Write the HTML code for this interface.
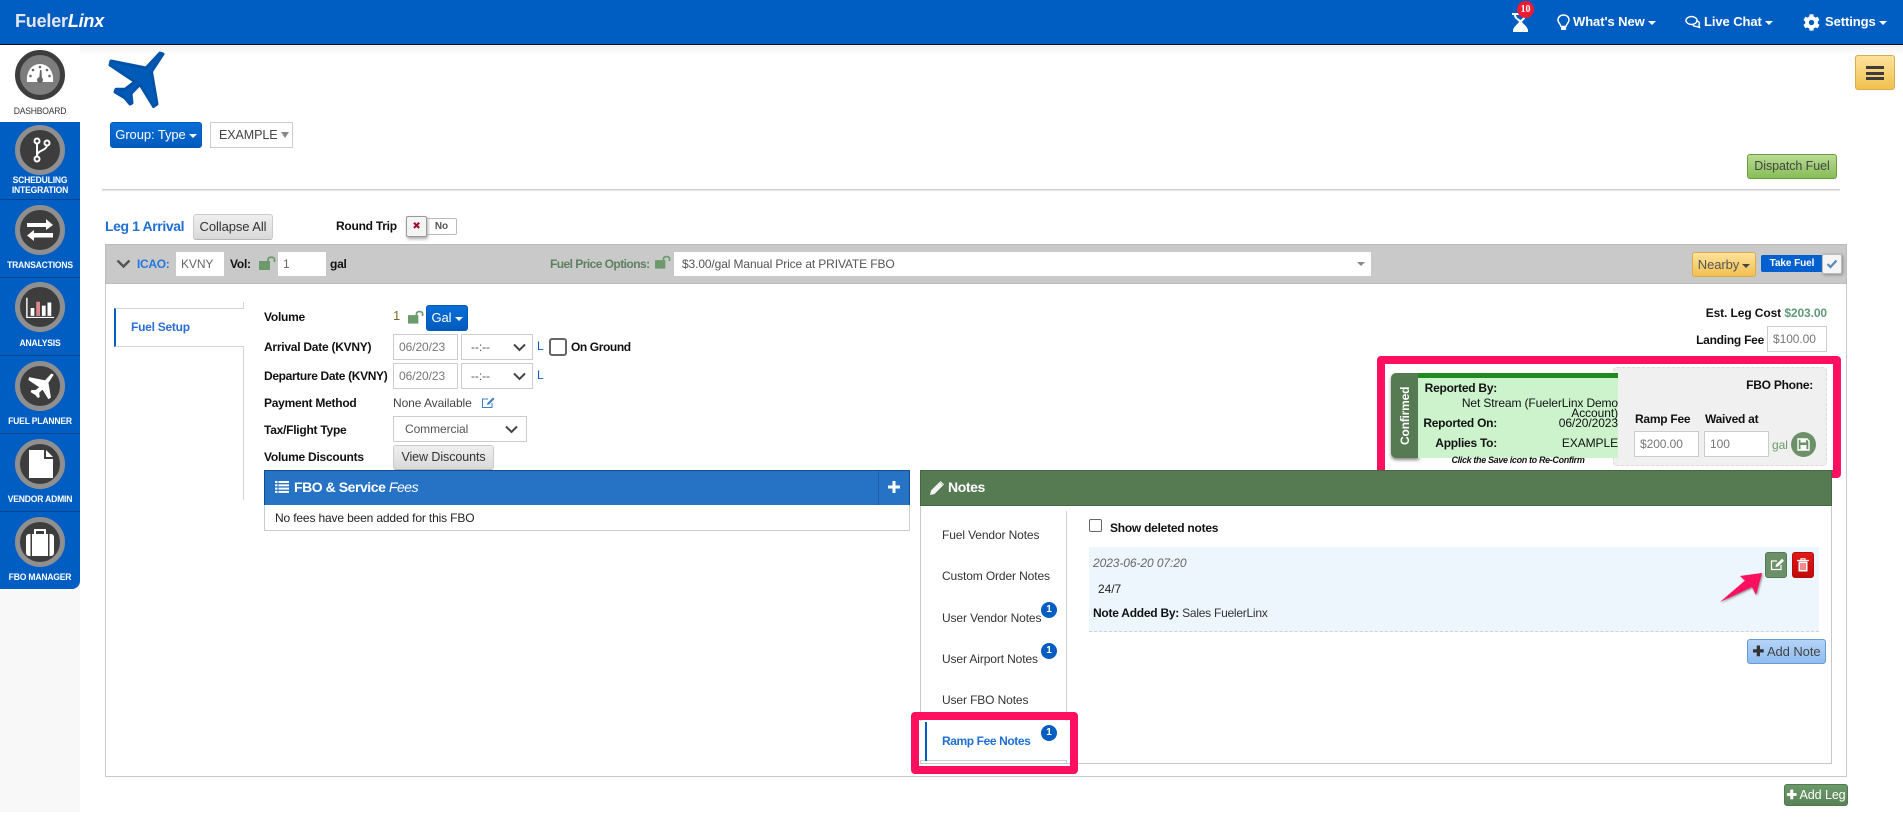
<!DOCTYPE html>
<html><head><meta charset="utf-8"><title>FuelerLinx</title>
<style>
html,body{margin:0;padding:0;background:#fff}
body{width:1903px;height:829px;overflow:hidden;position:relative;font-family:"Liberation Sans",Arial,sans-serif;font-size:12px;color:#333;letter-spacing:-.08px}
.a,.t,svg.a{position:absolute}
.t{white-space:nowrap;line-height:16px;height:16px}
.b{font-weight:bold;color:#111;letter-spacing:-.25px}
.r{text-align:right}
.inp{position:absolute;box-sizing:border-box;background:#fff;border:1px solid #ccc;color:#666;line-height:24px;padding-left:5px;white-space:nowrap}
.btn{position:absolute;box-sizing:border-box;border-radius:3px;text-align:center;white-space:nowrap}
.gray{background:linear-gradient(#efefef,#d9d9d9);border:1px solid #ccc;border-bottom:1px solid #b5b5b5;color:#333}
.blue{background:linear-gradient(#0a6fd8,#005bbd);border:1px solid #0058b8;color:#fff}
.nav{position:absolute;left:0;width:80px;background:#005ec2;border-bottom:1px solid #00458f;box-sizing:border-box}
.circ{position:absolute;left:15px;width:50px;height:50px;box-sizing:border-box;border-radius:50%;background:#3d3d3d;border:5px solid #8f8f8f}
.nl{position:absolute;left:0;width:80px;text-align:center;font-size:9.5px;line-height:10px;font-weight:bold;color:#fff;white-space:nowrap;letter-spacing:-.2px;transform:scaleX(.9)}
.caret{display:inline-block;width:0;height:0;border-left:4px solid transparent;border-right:4px solid transparent;border-top:4px solid currentColor;vertical-align:middle;margin-left:3px}
.hn{font-size:13px;font-weight:bold;color:#fff}
.badge{position:absolute;width:16px;height:16px;border-radius:50%;background:#005ec2;color:#fff;font-size:10px;line-height:16px;text-align:center;font-weight:bold}
.pk{position:absolute;box-sizing:border-box;border:8px solid #ff0f5f;border-radius:4px}
.nt{font-size:12px;color:#333;letter-spacing:-.12px}
</style></head><body>

<!-- header -->
<div class="a" style="left:0;top:0;width:1903px;height:45px;background:#005ec2;border-bottom:1.5px solid #111;box-sizing:border-box"></div>
<div class="a" style="left:80px;top:45px;width:1823px;height:10px;background:linear-gradient(#f1f1f1,#fff)"></div>
<div class="t" style="left:15px;top:10px;font-size:18px;line-height:22px;height:22px;font-weight:bold;color:#e4e8ee;letter-spacing:-.2px">Fueler<i style="color:#fff">Linx</i></div>

<svg class="a" style="left:1510px;top:10px" width="22" height="24" viewBox="0 0 22 24"><path d="M2 3H19V5H16C16 9 13 10 12 12C13 14 17 16 18 20V22H3V20C4 16 8 14 9 12C8 10 4 9 4 5H2Z" fill="#fff"/><path d="M6 5H14C14 8 11.5 9 10.500 10C9.500 9 6 8 6 5Z" fill="#005ec2"/></svg>
<div class="a" style="left:1517px;top:1px;width:17px;height:17px;border-radius:50%;background:#ed1c33;color:#fff;font:bold 10px/17px 'Liberation Serif',serif;text-align:center">10</div>

<svg class="a" style="left:1557px;top:14px" width="13" height="17" viewBox="0 0 13 17"><path d="M6.500 1C3.500 1 1 3 1 6C1 8.500 3.500 10 4 12.500H9C9.500 10 12 8.500 12 6C12 3 9.500 1 6.500 1Z" fill="none" stroke="#fff" stroke-width="1.500"/><rect x="4" y="13" width="5" height="3" rx="1" fill="#fff"/></svg>
<div class="t hn" style="left:1573px;top:14px">What's New<span class="caret"></span></div>
<svg class="a" style="left:1685px;top:15px" width="16" height="14" viewBox="0 0 16 14"><ellipse cx="6.500" cy="5.500" rx="5.500" ry="4" fill="none" stroke="#fff" stroke-width="1.400"/><path d="M11 6C14 6 15 8 14 10L14.500 12.500L11.500 11.500C10 11.500 8.500 11 8 10" fill="none" stroke="#fff" stroke-width="1.400"/></svg>
<div class="t hn" style="left:1704px;top:14px">Live Chat<span class="caret"></span></div>
<svg class="a" style="left:1803px;top:14px" width="17" height="17" viewBox="0 0 512 512"><path fill="#fff" d="M487.400 315.700l-42.600-24.600c4.300-23.200 4.300-47 0-70.200l42.600-24.600c4.900-2.800 7.100-8.600 5.500-14-11.100-35.600-30-67.800-54.700-94.600-3.800-4.100-10-5.100-14.800-2.300L380.800 110c-17.900-15.400-38.500-27.300-60.800-35.100V25.800c0-5.600-3.900-10.500-9.400-11.700-36.700-8.200-74.300-7.800-109.200 0-5.500 1.200-9.400 6.100-9.400 11.700V75c-22.200 7.900-42.800 19.800-60.800 35.100L88.700 85.500c-4.900-2.800-11-1.900-14.800 2.300-24.700 26.700-43.600 58.900-54.700 94.600-1.700 5.400.6 11.200 5.500 14L67.300 221c-4.300 23.200-4.300 47 0 70.200l-42.600 24.600c-4.900 2.800-7.100 8.600-5.500 14 11.100 35.600 30 67.800 54.700 94.600 3.800 4.100 10 5.100 14.800 2.300l42.600-24.600c17.900 15.400 38.500 27.300 60.800 35.100v49.200c0 5.600 3.900 10.500 9.400 11.700 36.700 8.200 74.300 7.800 109.200 0 5.500-1.200 9.400-6.100 9.400-11.700v-49.200c22.200-7.900 42.800-19.800 60.800-35.100l42.600 24.600c4.900 2.800 11 1.900 14.800-2.300 24.700-26.700 43.600-58.900 54.700-94.600 1.500-5.500-.7-11.300-5.600-14.100zM256 336c-44.100 0-80-35.900-80-80s35.900-80 80-80 80 35.900 80 80-35.900 80-80 80z"/></svg>
<div class="t hn" style="left:1825px;top:14px">Settings<span class="caret"></span></div>

<!-- sidebar -->
<div class="a" style="left:0;top:45px;width:80px;height:767px;background:#f8f8f8"></div>
<div class="a" style="left:0;top:45px;width:80px;height:77px;background:#fff"></div>
<div class="nav" style="top:122px;height:78px"></div>
<div class="nav" style="top:200px;height:78px"></div>
<div class="nav" style="top:278px;height:78px"></div>
<div class="nav" style="top:356px;height:78px"></div>
<div class="nav" style="top:434px;height:78px"></div>
<div class="nav" style="top:512px;height:77px;border:0;border-bottom-right-radius:8px"></div>

<div class="circ" style="top:50px;background:#7d7d7d;border-color:#3d3d3d"></div>
<svg class="a" style="left:26px;top:63px" width="28" height="20" viewBox="0 0 28 20"><path d="M1 19C0 8 6 1 14 1C22 1 28 8 27 19Z" fill="#fff"/><g fill="#666"><circle cx="14" cy="4" r="1.300"/><circle cx="7" cy="7" r="1.300"/><circle cx="21" cy="7" r="1.300"/><circle cx="4.500" cy="13" r="1.300"/><circle cx="23.500" cy="13" r="1.300"/><path d="M13 18L14 7L15.500 7L16 18Z"/><circle cx="14" cy="17" r="3"/></g></svg>
<div class="nl" style="top:107px;color:#333;font-weight:normal">DASHBOARD</div>

<div class="circ" style="top:125px"></div>
<svg class="a" style="left:31px;top:137px" width="20" height="26" viewBox="0 0 20 26" fill="none" stroke="#fff" stroke-width="2"><circle cx="6" cy="4" r="2.500"/><circle cx="16" cy="6" r="2.500"/><circle cx="6" cy="22" r="2.500"/><path d="M6 6.500V19.500M6 18C7 13 15 14 16 8.500"/></svg>
<div class="nl" style="top:176px">SCHEDULING</div><div class="nl" style="top:186px">INTEGRATION</div>

<div class="circ" style="top:205px"></div>
<svg class="a" style="left:26px;top:219px" width="28" height="22" viewBox="0 0 28 22" fill="#fff"><path d="M1 4H20V0L27 6L20 11V8H1Z"/><path d="M27 14H8V11L1 16.500L8 22V18.500H27Z"/></svg>
<div class="nl" style="top:261px">TRANSACTIONS</div>

<div class="circ" style="top:282px"></div>
<svg class="a" style="left:25px;top:297px" width="30" height="22" viewBox="0 0 32 28" preserveAspectRatio="none"><path d="M2 1V26H31" fill="none" stroke="#fff" stroke-width="1.500"/><rect x="6" y="14" width="4" height="10" fill="#fff"/><rect x="12" y="6" width="4" height="18" fill="#d88"/><rect x="18" y="11" width="4" height="13" fill="#fff"/><rect x="24" y="7" width="4" height="17" fill="#fff"/></svg>
<div class="nl" style="top:339px">ANALYSIS</div>

<div class="circ" style="top:361px"></div>
<svg class="a" style="left:28px;top:373px" width="26" height="26" viewBox="108 50 57 58"><path d="M163 54L160 53L146 68L111 61L110 65L135 81.700L125 89.300L116 89.300L115 92L125 98L130 104L132 103L131 93.500L140 84.500L153.500 106.500L157 104L151.500 71.500Z" fill="#fff" stroke="#fff" stroke-width="3" stroke-linejoin="round"/></svg>
<div class="nl" style="top:417px">FUEL PLANNER</div>

<div class="circ" style="top:439px"></div>
<svg class="a" style="left:28px;top:449px" width="26" height="30" viewBox="0 0 26 30"><path d="M1 1H16V10H25V29H1Z" fill="#fff"/><path d="M18 1L25 8H18Z" fill="#fff"/></svg>
<div class="nl" style="top:495px">VENDOR ADMIN</div>

<div class="circ" style="top:517px"></div>
<svg class="a" style="left:26px;top:528px" width="28" height="28" viewBox="0 0 28 28"><rect x="0" y="6" width="28" height="22" rx="3" fill="#fff"/><path d="M9 6V2H19V6" fill="none" stroke="#fff" stroke-width="2"/><rect x="4.500" y="6" width="1.500" height="22" fill="#3d3d3d"/><rect x="22" y="6" width="1.500" height="22" fill="#3d3d3d"/></svg>
<div class="nl" style="top:573px">FBO MANAGER</div>

<!-- top area -->
<svg class="a" style="left:100px;top:45px" width="75" height="70" viewBox="100 45 75 70"><path d="M163 54L160 53L146 68L111 61L110 65L135 81.700L125 89.300L116 89.300L115 92L125 98L130 104L132 103L131 93.500L140 84.500L153.500 106.500L157 104L151.500 71.500Z" fill="#005ab8" stroke="#0052a8" stroke-width="3" stroke-linejoin="round"/></svg>
<div class="btn blue" style="left:110px;top:122px;width:92px;height:26px;line-height:24px;font-size:13px">Group: Type<span class="caret"></span></div>
<div class="inp" style="left:210px;top:122px;width:83px;height:26px;padding-left:8px;font-size:12.500px;color:#444">EXAMPLE<span class="caret" style="color:#888;margin-left:3px;border-left-width:4.500px;border-right-width:4.500px;border-top-width:6px;margin-top:-2px"></span></div>
<div class="btn" style="left:1855px;top:55px;width:40px;height:35px;background:linear-gradient(#fde29c,#f1c04f);border:1px solid #d7ac4a"></div>
<div class="a" style="left:1866px;top:66px;width:18px;height:3px;background:#3c3c3c"></div>
<div class="a" style="left:1866px;top:71.500px;width:18px;height:3px;background:#3c3c3c"></div>
<div class="a" style="left:1866px;top:77px;width:18px;height:3px;background:#3c3c3c"></div>
<div class="btn" style="left:1747px;top:154px;width:90px;height:25px;line-height:23px;font-size:12.500px;color:#444;background:linear-gradient(#b9db93,#86bd56);border:1px solid #6d9c3f">Dispatch Fuel</div>
<div class="a" style="left:102px;top:189px;width:1738px;height:1px;background:#ccc;box-shadow:0 1px 1px #ddd"></div>

<!-- leg row -->
<div class="t" style="left:105px;top:217px;font-size:14px;font-weight:bold;color:#1f6fd6;line-height:18px;height:18px;letter-spacing:-.4px">Leg 1 Arrival</div>
<div class="btn gray" style="left:193px;top:214px;width:80px;height:26px;line-height:24px;font-size:13px">Collapse All</div>
<div class="t b" style="left:336px;top:218px">Round Trip</div>
<div class="a" style="left:406px;top:218px;width:51px;height:17px;box-sizing:border-box;border:1px solid #bbb;border-radius:2px;background:#fff;color:#555;font:bold 10px/16px 'Liberation Sans';text-align:right;padding-right:8px">No</div>
<div class="a" style="left:406px;top:216px;width:21px;height:21px;box-sizing:border-box;border:1px solid #999;border-radius:2px;background:#f4f4f4;box-shadow:1px 2px 3px #aaa;color:#a0102e;font:bold 10px/19px 'DejaVu Sans';text-align:center">✖</div>

<!-- main panel -->
<div class="a" style="left:105px;top:244px;width:1742px;height:533px;box-sizing:border-box;border:1px solid #c8c8c8;background:#fff"></div>
<div class="a" style="left:105px;top:244px;width:1742px;height:40px;box-sizing:border-box;background:#c9c9c9;border:1px solid #bbb"></div>
<svg class="a" style="left:116px;top:259px" width="15" height="10" viewBox="0 0 15 10"><path d="M1.500 1.500L7.500 7.500L13.500 1.500" fill="none" stroke="#555" stroke-width="2.400"/></svg>
<div class="t" style="left:137px;top:256px;font-weight:bold;color:#2577e0;letter-spacing:-.3px">ICAO:</div>
<div class="a" style="left:176px;top:252px;width:48px;height:24px;background:#fff;color:#666;line-height:24px;padding-left:5px;box-sizing:border-box">KVNY</div>
<div class="t b" style="left:230px;top:256px">Vol:</div>
<svg class="a" style="left:259px;top:256px" width="17" height="14" viewBox="0 0 17 14"><rect x="0" y="5" width="11" height="9" fill="#6c9a6a"/><path d="M9 5V3.500C9 .5 15.500 .5 15.500 3.500V6" fill="none" stroke="#6c9a6a" stroke-width="1.800"/></svg>
<div class="a" style="left:278px;top:252px;width:48px;height:24px;background:#fff;color:#666;line-height:24px;padding-left:5px;box-sizing:border-box">1</div>
<div class="t b" style="left:330px;top:256px">gal</div>

<div class="t" style="left:550px;top:256px;font-weight:bold;color:#5e8060;letter-spacing:-.55px">Fuel Price Options:</div>
<svg class="a" style="left:655px;top:255px" width="16" height="14" viewBox="0 0 17 14"><rect x="0" y="5" width="11" height="9" fill="#6c9a6a"/><path d="M9 5V3.500C9 .5 15.500 .5 15.500 3.500V6" fill="none" stroke="#6c9a6a" stroke-width="1.800"/></svg>
<div class="a" style="left:674px;top:252px;width:697px;height:24px;background:#fff;color:#555;line-height:24px;padding-left:8px;box-sizing:border-box;letter-spacing:-.12px">$3.00/gal Manual Price at PRIVATE FBO<span class="caret" style="position:absolute;left:680px;top:10px;color:#888"></span></div>

<div class="btn" style="left:1692px;top:252px;width:64px;height:25px;line-height:23px;font-size:13px;color:#555;background:linear-gradient(#fde29c,#f1c04f);border:1px solid #d7ac4a">Nearby<span class="caret" style="color:#444"></span></div>
<div class="a" style="left:1761px;top:255px;width:62px;height:17px;background:#0060cf;border-radius:2px 0 0 2px;color:#fff;font:bold 10px/17px 'Liberation Sans';text-align:center">Take Fuel</div>
<div class="a" style="left:1822px;top:254px;width:20px;height:20px;box-sizing:border-box;background:#f5f5f5;border:1px solid #bbb;box-shadow:1px 1px 3px #888;border-radius:2px"></div>
<svg class="a" style="left:1826px;top:259px" width="12" height="10" viewBox="0 0 12 10"><path d="M1.500 5L4.500 8L10.500 1.500" fill="none" stroke="#5a8ab0" stroke-width="2.200"/></svg>

<!-- left tab -->
<div class="a" style="left:243px;top:302px;width:1px;height:198px;background:#d5d5d5"></div>
<div class="a" style="left:114px;top:308px;width:130px;height:39px;box-sizing:border-box;background:#fff;border-top:1px solid #d5d5d5;border-bottom:1px solid #d5d5d5;border-left:2px solid #005ec2"></div>
<div class="a" style="left:243px;top:303px;width:1px;height:5px;background:#d5d5d5"></div>
<div class="t" style="left:131px;top:319px;font-weight:bold;color:#2a6fd6;letter-spacing:-.25px">Fuel Setup</div>

<!-- form -->
<div class="t b" style="left:264px;top:309px">Volume</div>
<div class="t" style="left:393px;top:308px;color:#7a6a2a;font-size:13px">1</div>
<svg class="a" style="left:408px;top:310px" width="16" height="14" viewBox="0 0 17 14"><rect x="0" y="5" width="11" height="9" fill="#6c9a6a"/><path d="M9 5V3.500C9 .5 15.500 .5 15.500 3.500V6" fill="none" stroke="#6c9a6a" stroke-width="1.800"/></svg>
<div class="btn blue" style="left:426px;top:305px;width:42px;height:26px;line-height:24px;font-size:13px">Gal<span class="caret"></span></div>

<div class="t b" style="left:264px;top:339px">Arrival Date (KVNY)</div>
<div class="inp" style="left:393px;top:334px;width:65px;height:26px;color:#777">06/20/23</div>
<div class="inp" style="left:461px;top:334px;width:72px;height:26px;color:#555;padding-left:9px">--:--</div>
<svg class="a" style="left:513px;top:343px" width="13" height="9" viewBox="0 0 13 9"><path d="M1 1.500L6.500 7L12 1.500" fill="none" stroke="#444" stroke-width="2"/></svg>
<div class="t" style="left:537px;top:338px;color:#0a5ec2">L</div>
<div class="a" style="left:549px;top:338px;width:18px;height:18px;box-sizing:border-box;border:2px solid #666;border-radius:3px;background:#fff"></div>
<div class="t b" style="left:571px;top:339px;letter-spacing:-.4px">On Ground</div>

<div class="t b" style="left:264px;top:368px;letter-spacing:-.35px">Departure Date (KVNY)</div>
<div class="inp" style="left:393px;top:363px;width:65px;height:26px;color:#777">06/20/23</div>
<div class="inp" style="left:461px;top:363px;width:72px;height:26px;color:#555;padding-left:9px">--:--</div>
<svg class="a" style="left:513px;top:372px" width="13" height="9" viewBox="0 0 13 9"><path d="M1 1.500L6.500 7L12 1.500" fill="none" stroke="#444" stroke-width="2"/></svg>
<div class="t" style="left:537px;top:367px;color:#0a5ec2">L</div>

<div class="t b" style="left:264px;top:395px">Payment Method</div>
<div class="t" style="left:393px;top:395px;color:#444">None Available</div>
<svg class="a" style="left:481px;top:396px" width="15" height="13" viewBox="0 0 15 13"><path d="M11 7V11.500H1.500V3H7" fill="none" stroke="#3d7fc4" stroke-width="1"/><path d="M6 9L6.500 7L12 1.500L13.500 3L8 8.500Z" fill="#3d7fc4"/></svg>

<div class="t b" style="left:264px;top:422px">Tax/Flight Type</div>
<div class="inp" style="left:393px;top:416px;width:134px;height:26px;color:#555;padding-left:11px">Commercial</div>
<svg class="a" style="left:505px;top:425px" width="13" height="9" viewBox="0 0 13 9"><path d="M1 1.500L6.500 7L12 1.500" fill="none" stroke="#444" stroke-width="2"/></svg>

<div class="t b" style="left:264px;top:449px">Volume Discounts</div>
<div class="btn gray" style="left:393px;top:445px;width:101px;height:25px;line-height:23px;font-size:12.500px">View Discounts</div>

<!-- est -->
<div class="t b r" style="right:76px;top:305px;letter-spacing:-.1px"><span>Est. Leg Cost</span> <span style="color:#5e9a7a">$203.00</span></div>
<div class="t b r" style="left:1650px;width:114px;top:332px">Landing Fee</div>
<div class="inp" style="left:1767px;top:326px;width:60px;height:26px;color:#777">$100.00</div>

<!-- confirm box -->
<div class="pk" style="left:1377px;top:356px;width:464px;height:122px"></div>
<div class="a" style="left:1613px;top:367px;width:214px;height:99px;box-sizing:border-box;background:#f0f0f0;border:1px dashed #ddd;border-radius:4px"></div>
<div class="a" style="left:1391px;top:373px;width:28px;height:85px;background:#567a52;border-radius:5px 0 0 5px;box-shadow:0 2px 3px #888"></div>
<div class="a" style="left:1391px;top:373px;width:28px;height:85px;color:#fff;font-weight:bold;font-size:12px;writing-mode:vertical-rl;transform:rotate(180deg);text-align:center;line-height:28px;letter-spacing:-.2px">Confirmed</div>
<div class="a" style="left:1418px;top:373px;width:200px;height:85px;background:#cdf3cd"></div>
<div class="a" style="left:1418px;top:373px;width:200px;height:5px;background:#1f8a1f"></div>
<div class="t b r" style="left:1400px;width:97px;top:380px">Reported By:</div>
<div class="t r" style="left:1420px;width:198px;top:395px;color:#111;letter-spacing:-.12px">Net Stream (FuelerLinx Demo</div>
<div class="t r" style="left:1420px;width:198px;top:405px;color:#111">Account)</div>
<div class="t b r" style="left:1400px;width:97px;top:415px">Reported On:</div>
<div class="t r" style="left:1420px;width:198px;top:415px;color:#111">06/20/2023</div>
<div class="t b r" style="left:1400px;width:97px;top:435px">Applies To:</div>
<div class="t r" style="left:1420px;width:198px;top:435px;color:#111">EXAMPLE</div>
<div class="t" style="left:1418px;width:200px;top:452px;text-align:center;font-size:9px;font-style:italic;font-weight:bold;color:#111;letter-spacing:-.35px">Click the Save icon to Re-Confirm</div>
<div class="t b r" style="left:1700px;width:113px;top:377px">FBO Phone:</div>
<div class="t b" style="left:1635px;top:411px">Ramp Fee</div>
<div class="t b" style="left:1705px;top:411px">Waived at</div>
<div class="inp" style="left:1634px;top:431px;width:65px;height:26px;color:#777">$200.00</div>
<div class="inp" style="left:1704px;top:431px;width:65px;height:26px;color:#777">100</div>
<div class="t" style="left:1772px;top:437px;color:#6c9a6a">gal</div>
<div class="a" style="left:1791px;top:432px;width:25px;height:25px;border-radius:50%;background:#6c9067"></div>
<svg class="a" style="left:1797px;top:438px" width="13" height="13" viewBox="0 0 13 13"><path d="M1 1H10L12 3V12H1Z" fill="none" stroke="#fff" stroke-width="1.400"/><rect x="3.500" y="1" width="5.500" height="3.500" fill="#fff"/><rect x="3.500" y="7" width="6" height="5" fill="#fff"/></svg>

<!-- FBO fees -->
<div class="a" style="left:264px;top:470px;width:646px;height:36px;box-sizing:border-box;background:#2672c5;border:1px solid #0f4c92"></div>
<div class="a" style="left:264px;top:505px;width:646px;height:26px;box-sizing:border-box;border:1px solid #ccc;border-top:0;background:#fff"></div>
<svg class="a" style="left:275px;top:481px" width="14" height="12" viewBox="0 0 14 12" fill="#fff"><rect x="0" y="0" width="2.500" height="2"/><rect x="3.500" y="0" width="10.500" height="2"/><rect x="0" y="3.300" width="2.500" height="2"/><rect x="3.500" y="3.300" width="10.500" height="2"/><rect x="0" y="6.600" width="2.500" height="2"/><rect x="3.500" y="6.600" width="10.500" height="2"/><rect x="0" y="9.900" width="2.500" height="2"/><rect x="3.500" y="9.900" width="10.500" height="2"/></svg>
<div class="t" style="left:294px;top:478px;font-size:14px;line-height:18px;height:18px;font-weight:bold;color:#fff;letter-spacing:-.45px">FBO &amp; Service <i style="font-weight:normal">Fees</i></div>
<div class="a" style="left:878px;top:471px;width:1px;height:34px;background:#1c5ea8"></div>
<svg class="a" style="left:888px;top:481px" width="12" height="12" viewBox="0 0 12 12"><path d="M4.500 0H7.500V4.500H12V7.500H7.500V12H4.500V7.500H0V4.500H4.500Z" fill="#fff"/></svg>
<div class="t" style="left:275px;top:510px;color:#222;letter-spacing:-.15px">No fees have been added for this FBO</div>

<!-- Notes -->
<div class="a" style="left:920px;top:470px;width:912px;height:294px;box-sizing:border-box;border:1px solid #c8c8c8;background:#fff"></div>
<div class="a" style="left:920px;top:470px;width:912px;height:36px;box-sizing:border-box;background:#567a52;border:1px solid #476644"></div>
<svg class="a" style="left:930px;top:481px" width="14" height="14" viewBox="0 0 14 14"><path d="M0 14L1 9.500L9.500 1L13 4.500L4.500 13Z" fill="#f4f4f4"/><path d="M10.500 0L14 3.500L13.200 4.200L9.800 .8Z" fill="#fff"/></svg>
<div class="t" style="left:948px;top:478px;font-size:14px;line-height:18px;height:18px;font-weight:bold;color:#fff;letter-spacing:-.4px">Notes</div>
<div class="a" style="left:1066px;top:511px;width:1px;height:252px;background:#d0d0d0"></div>

<div class="t nt" style="left:942px;top:527px">Fuel Vendor Notes</div>
<div class="t nt" style="left:942px;top:568px">Custom Order Notes</div>
<div class="t nt" style="left:942px;top:610px">User Vendor Notes</div>
<div class="t nt" style="left:942px;top:651px">User Airport Notes</div>
<div class="t nt" style="left:942px;top:692px">User FBO Notes</div>
<div class="a" style="left:920px;top:721px;width:147px;height:40px;background:#fff;box-sizing:border-box;border-bottom:1px solid #d0d0d0"></div>
<div class="a" style="left:925px;top:722px;width:2px;height:39px;background:#005ec2"></div>
<div class="t" style="left:942px;top:733px;font-weight:bold;color:#1f6fd6;letter-spacing:-.4px">Ramp Fee Notes</div>
<div class="badge" style="left:1041px;top:602px">1</div>
<div class="badge" style="left:1041px;top:643px">1</div>
<div class="badge" style="left:1041px;top:725px">1</div>
<div class="pk" style="left:911px;top:712px;width:167px;height:62px"></div>

<div class="a" style="left:1089px;top:519px;width:13px;height:13px;box-sizing:border-box;border:1px solid #666;border-radius:2px;background:#fff"></div>
<div class="t b" style="left:1110px;top:520px">Show deleted notes</div>
<div class="a" style="left:1089px;top:547px;width:730px;height:85px;box-sizing:border-box;background:#eef6fd;border-bottom:1px dashed #c8d4de"></div>
<div class="t" style="left:1093px;top:555px;font-style:italic;color:#666">2023-06-20 07:20</div>
<div class="t" style="left:1098px;top:581px;color:#222">24/7</div>
<div class="t" style="left:1093px;top:605px;color:#333;letter-spacing:-.25px"><b style="color:#111">Note Added By:</b> Sales FuelerLinx</div>
<div class="btn" style="left:1765px;top:552px;width:22px;height:26px;background:#6c9067;border:1px solid #557a52"></div>
<svg class="a" style="left:1770px;top:558px" width="15" height="13" viewBox="0 0 15 13"><path d="M11 7V11.500H1.500V3H7" fill="none" stroke="#fff" stroke-width="1.200"/><path d="M5.500 9L6 6.500L12 .8L14 2.700L8 8.500Z" fill="#fff"/></svg>
<div class="btn" style="left:1792px;top:552px;width:22px;height:26px;background:linear-gradient(#e21818,#c20a0a);border:1px solid #b50e0e"></div>
<svg class="a" style="left:1797px;top:558px" width="12" height="14" viewBox="0 0 12 14"><path d="M0 2.500H12M4 2.500V.8H8V2.500" fill="none" stroke="#fff" stroke-width="1.200"/><path d="M1.500 3.500H10.500V13.500H1.500Z" fill="#fff"/><path d="M4 5V12M6 5V12M8 5V12" stroke="#e21818" stroke-width="1"/></svg>
<svg class="a" style="left:1715px;top:560px" width="52" height="48" viewBox="0 0 52 48"><path d="M5 42L30 20.500L25 16L47 13L41 35L37 27Z" fill="#ff0f5f" style="filter:drop-shadow(1px 1px 1px #888)"/></svg>
<div class="btn" style="left:1747px;top:639px;width:79px;height:25px;line-height:23px;font-size:13px;color:#444;background:linear-gradient(#b5d3f7,#8fbdf2);border:1px solid #6a9bd0"><b style="color:#333;font-size:14px">✚</b> Add Note</div>
<div class="btn" style="left:1784px;top:784px;width:64px;height:22px;line-height:20px;font-size:12.500px;color:#fff;background:linear-gradient(#6c9a6a,#5a8358);border:1px solid #4f7a4d"><b>✚</b> Add Leg</div>

</body></html>
